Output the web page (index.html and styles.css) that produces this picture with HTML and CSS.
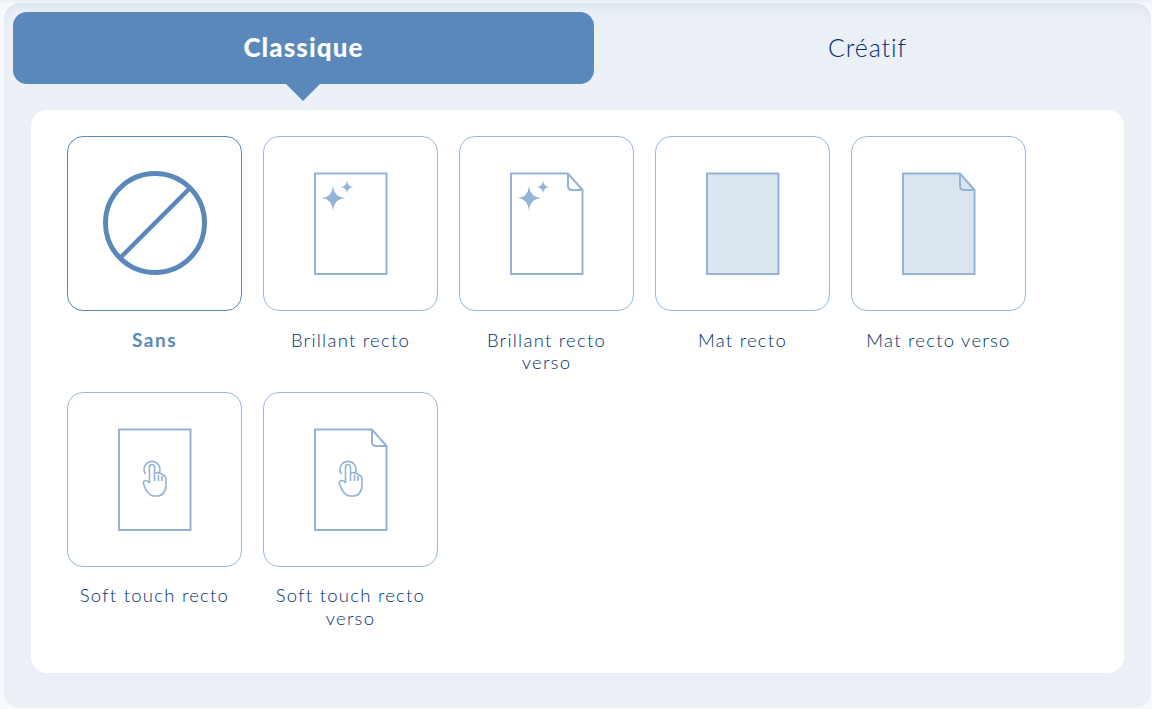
FILE: index.html
```html
<!DOCTYPE html>
<html lang="fr">
<head>
  <meta charset="UTF-8">
  <meta name="viewport" content="width=device-width, initial-scale=1.0">
  <title>Pelliculage</title>
  <link rel="stylesheet" href="styles.css">
</head>
<body>

  <!-- Shared icon parts -->
  <svg class="icon-defs" width="0" height="0">
    <defs>
      <path id="sheet" d="M51 36.500H122.500V137H51Z"/>
      <path id="sheet-fold" d="M51 36.500H108L122.500 53V137H51Z"/>
      <path id="fold" d="M108 36.500V49Q108 53 112 53H122.500"/>
      <g id="stars">
        <path d="M69 49Q70 60 81 61Q70 62 69 74Q68 62 58 61Q68 60 69 49Z"/>
        <path d="M83 43.500Q83.500 49.500 89.500 50Q83.500 50.500 83 56.500Q82.500 50.500 76.500 50Q82.500 49.500 83 43.500Z"/>
      </g>
      <g id="hand">
        <path d="M77.500 81A8 8 0 1 1 90.500 81"/>
        <path d="M81.500 90V74A2.500 2.500 0 0 1 86.500 74V88"/>
        <path d="M90.500 82V88M94 83V88"/>
        <path d="M86.500 80Q92 79 95 82Q98 83 98 86V92C98 99 94 103 89 103H86C82 103 80 100 78 97L75.500 91C74.500 87 79 86 81.500 90"/>
      </g>
    </defs>
  </svg>

  <div class="panel">
    <div class="tabs">
      <div class="tab tab-active">Classique</div>
      <div class="tab tab-plain">Créatif</div>
    </div>

    <div class="content">
      <div class="options">

        <div class="option option-active">
          <div class="thumb">
            <svg viewBox="0 0 173 173">
              <circle class="no-ring" cx="87" cy="86" r="49.500"/>
              <path class="no-line" d="M53 120L121 52"/>
            </svg>
          </div>
          <div class="label">Sans</div>
        </div>

        <div class="option">
          <div class="thumb">
            <svg viewBox="0 0 173 173">
              <use class="line" href="#sheet"/>
              <use class="star" href="#stars"/>
            </svg>
          </div>
          <div class="label">Brillant recto</div>
        </div>

        <div class="option">
          <div class="thumb">
            <svg viewBox="0 0 173 173">
              <use class="line" href="#sheet-fold"/>
              <use class="line" href="#fold"/>
              <use class="star" href="#stars"/>
            </svg>
          </div>
          <div class="label">Brillant recto verso</div>
        </div>

        <div class="option">
          <div class="thumb">
            <svg viewBox="0 0 173 173">
              <use class="line mat" href="#sheet"/>
            </svg>
          </div>
          <div class="label">Mat recto</div>
        </div>

        <div class="option">
          <div class="thumb">
            <svg viewBox="0 0 173 173">
              <use class="line mat" href="#sheet-fold"/>
              <use class="line" href="#fold"/>
            </svg>
          </div>
          <div class="label">Mat recto verso</div>
        </div>

        <div class="option">
          <div class="thumb">
            <svg viewBox="0 0 173 173">
              <use class="line" href="#sheet"/>
              <use class="line thin" href="#hand"/>
            </svg>
          </div>
          <div class="label">Soft touch recto</div>
        </div>

        <div class="option">
          <div class="thumb">
            <svg viewBox="0 0 173 173">
              <use class="line" href="#sheet-fold"/>
              <use class="line" href="#fold"/>
              <use class="line thin" href="#hand"/>
            </svg>
          </div>
          <div class="label">Soft touch recto verso</div>
        </div>

      </div>
    </div>
  </div>

</body>
</html>
```

FILE: styles.css
```css
/* Basic page */
body {
  margin: 0;
  height: 709px;
  padding: 3px 1px 1px 4px;
  box-sizing: border-box;
  overflow: hidden;
  background: linear-gradient(#e9eef5 0, #f7f9fc 4px);
  font-family: "Lato", Arial, sans-serif;
  color: #002f6c;
}

.icon-defs {
  position: absolute;
}

.panel {
  height: 100%;
  padding: 9px 10px 35px 9px;
  box-sizing: border-box;
  background-color: #ebf0f7;
  border-radius: 16px;
  box-shadow: inset 0 8px 8px -5px rgba(90, 120, 150, 0.12);
  display: flex;
  flex-direction: column;
}

/* Tabs */
.tabs {
  display: flex;
  height: 72px;
  flex-shrink: 0;
}

.tab {
  flex: 1;
  display: flex;
  justify-content: center;
  align-items: center;
  padding-bottom: 3px;
  box-sizing: border-box;
  position: relative;
}

.tab-plain {
  font-size: 25px;
  font-weight: 300;
  letter-spacing: 0.9px;
}

.tab-active {
  flex: 0 0 581px;
  background-color: #5b88bb;
  border-radius: 14px;
  color: #fff;
  font-size: 26px;
  font-weight: 900;
  letter-spacing: 1.1px;
}

.tab-active::after {
  content: "";
  position: absolute;
  left: 273px;
  top: 72px;
  border-left: 17px solid transparent;
  border-right: 17px solid transparent;
  border-top: 17px solid #5b88bb;
}

/* White card */
.content {
  flex: 1;
  margin: 26px 17px 0 18px;
  padding: 26px 36px;
  background-color: #fff;
  border-radius: 16px;
}

.options {
  display: grid;
  grid-template-columns: repeat(5, 175px);
  column-gap: 21px;
  row-gap: 10.6px;
  grid-auto-rows: 245px;
}

.thumb {
  width: 175px;
  height: 175px;
  box-sizing: border-box;
  border: 1px solid #9db9d9;
  border-radius: 16px;
}

.thumb svg {
  display: block;
  width: 173px;
  height: 173px;
}

.option-active .thumb {
  border-color: #5b88bb;
}

.label {
  margin: 17.7px auto 0;
  max-width: 160px;
  text-align: center;
  font-size: 18.5px;
  line-height: 22.5px;
  letter-spacing: 1.25px;
  font-weight: 300;
}

.option-active .label {
  color: #5b88bb;
  font-size: 19px;
  font-weight: 700;
  letter-spacing: 1.5px;
}

/* Icon strokes */
.line {
  fill: none;
  stroke: #94b3d6;
  stroke-width: 2;
}

.thin {
  stroke-width: 1.6;
}

.mat {
  fill: #dbe5ef;
}

.star {
  fill: #94b3d6;
}

.no-ring {
  fill: none;
  stroke: #5b88bb;
  stroke-width: 5;
}

.no-line {
  fill: none;
  stroke: #5b88bb;
  stroke-width: 4.5;
}
```
